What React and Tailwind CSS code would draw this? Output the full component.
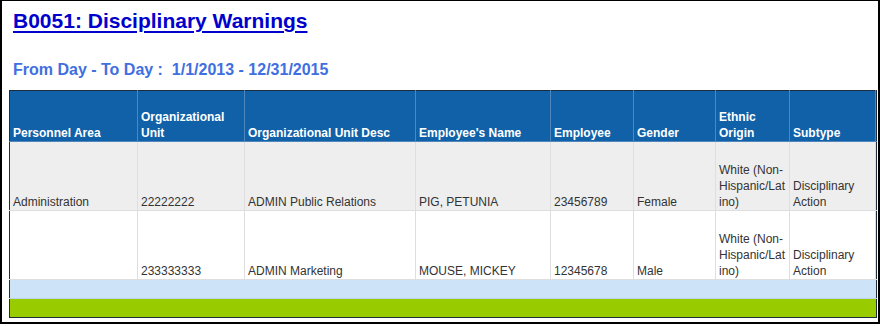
import React from 'react';

const columns = [
  { label: 'Personnel Area', w: 'w-[128px]' },
  { label: 'Organizational Unit', w: 'w-[107px]' },
  { label: 'Organizational Unit Desc', w: 'w-[171px]' },
  { label: "Employee's Name", w: 'w-[135px]' },
  { label: 'Employee', w: 'w-[83px]' },
  { label: 'Gender', w: 'w-[82px]' },
  { label: 'Ethnic Origin', w: 'w-[74px]' },
  { label: 'Subtype', w: 'w-[86px]' },
];

const rows = [
  ['Administration', '22222222', 'ADMIN Public Relations', 'PIG, PETUNIA', '23456789', 'Female', 'White (Non-Hispanic/Lat ino)', 'Disciplinary Action'],
  ['', '233333333', 'ADMIN Marketing', 'MOUSE, MICKEY', '12345678', 'Male', 'White (Non-Hispanic/Lat ino)', 'Disciplinary Action'],
];

function EthnicCell() {
  return (
    <>
      White (Non-
      <br />
      Hispanic/Lat
      <br />
      ino)
    </>
  );
}

export default function App() {
  return (
    <div className="h-[326px] w-[880px] bg-white" style={{ fontFamily: '"Liberation Sans", Arial, sans-serif' }}>
      <div className="h-[324px] w-[880px] border-2 border-t border-black pl-[11px] pt-[7px]">
        <h1 className="text-[21px] font-bold leading-[25px] text-[#0000cc] underline decoration-2 underline-offset-[3px]">
          B0051: Disciplinary Warnings
        </h1>
        <p className="mt-[27px] text-[16px] font-bold leading-[19px] text-[#3f6fe0] whitespace-pre">
          {'From Day - To Day :  1/1/2013 - 12/31/2015'}
        </p>

        <table className="-ml-[4px] mt-[11px] table-fixed border-collapse border border-[#1d2d3d] text-[12px]">
          <thead>
            <tr className="h-[51px] bg-[#1061a8] text-white">
              {columns.map((c) => (
                <th
                  key={c.label}
                  className={`${c.w} border-r border-b border-[#4f87bd] px-[3px] pb-0 text-left align-bottom font-bold leading-[16px]`}
                >
                  {c.label}
                </th>
              ))}
              <th className="w-[1px] border-b border-[#4f87bd] p-0" />
            </tr>
          </thead>
          <tbody>
            {rows.map((r, i) => (
              <tr key={i} className={`h-[69px] ${i === 0 ? 'bg-[#eeeeee]' : 'bg-white'} text-[#333333]`}>
                {r.map((cell, j) => (
                  <td
                    key={j}
                    className="border-r border-b border-[#dedede] px-[3px] pb-0 align-bottom leading-[16px]"
                  >
                    {j === 6 ? <EthnicCell /> : cell}
                  </td>
                ))}
                <td className="border-b border-[#dedede] p-0" />
              </tr>
            ))}
            <tr className="h-[19px] bg-[#cce3f8]">
              <td colSpan={9} className="border-b border-[#bcd2e6] p-0" />
            </tr>
            <tr className="h-[19px] bg-[#99cc00]">
              <td colSpan={9} className="p-0" />
            </tr>
          </tbody>
        </table>
      </div>
    </div>
  );
}
